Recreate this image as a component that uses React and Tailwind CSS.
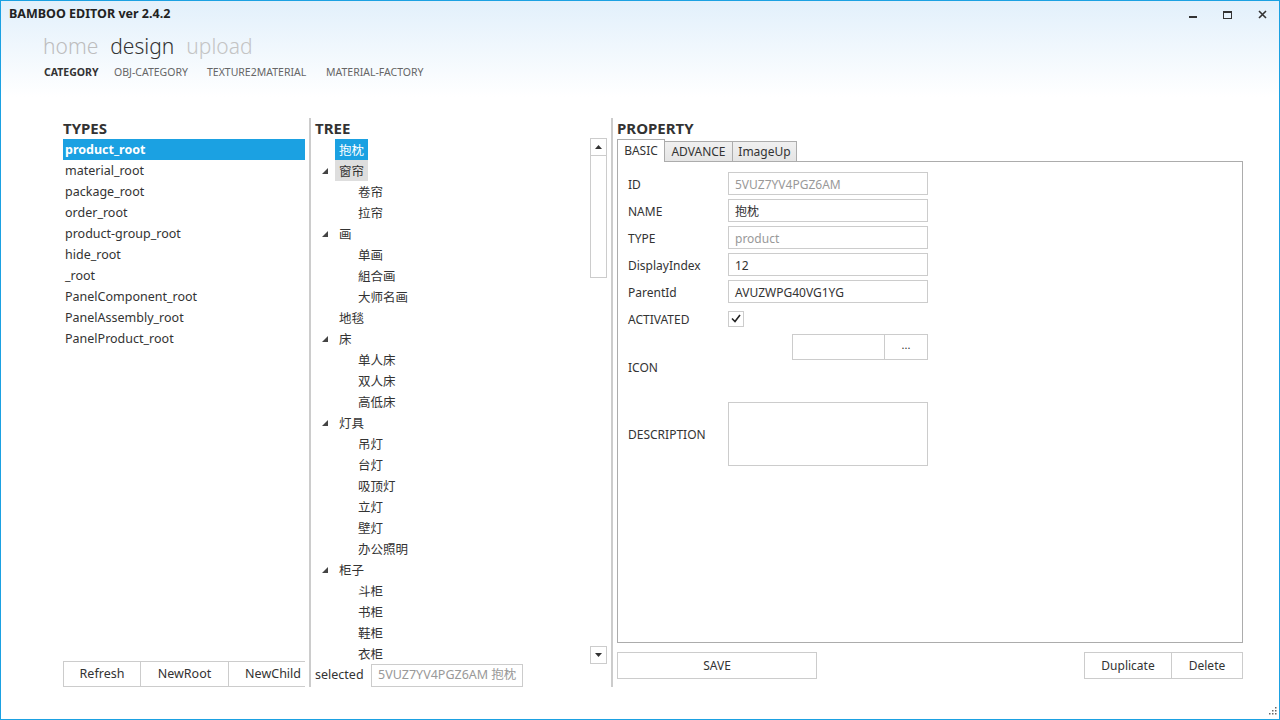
import React from "react";

const FONT = { fontFamily: '"Noto Sans","Noto Sans CJK SC",sans-serif' };

const types = [
  "product_root",
  "material_root",
  "package_root",
  "order_root",
  "product-group_root",
  "hide_root",
  "_root",
  "PanelComponent_root",
  "PanelAssembly_root",
  "PanelProduct_root",
];

// level 0 = root rows, level 1 = children; exp = shows expand glyph
const tree = [
  { t: "抱枕", l: 0, sel: true },
  { t: "窗帘", l: 0, exp: true, hover: true },
  { t: "卷帘", l: 1 },
  { t: "拉帘", l: 1 },
  { t: "画", l: 0, exp: true },
  { t: "单画", l: 1 },
  { t: "組合画", l: 1 },
  { t: "大师名画", l: 1 },
  { t: "地毯", l: 0 },
  { t: "床", l: 0, exp: true },
  { t: "单人床", l: 1 },
  { t: "双人床", l: 1 },
  { t: "高低床", l: 1 },
  { t: "灯具", l: 0, exp: true },
  { t: "吊灯", l: 1 },
  { t: "台灯", l: 1 },
  { t: "吸顶灯", l: 1 },
  { t: "立灯", l: 1 },
  { t: "壁灯", l: 1 },
  { t: "办公照明", l: 1 },
  { t: "柜子", l: 0, exp: true },
  { t: "斗柜", l: 1 },
  { t: "书柜", l: 1 },
  { t: "鞋柜", l: 1 },
  { t: "衣柜", l: 1 },
];

function Expander() {
  return (
    <svg width="6" height="6" viewBox="0 0 6 6" className="block">
      <polygon points="6,0 6,6 0,6" fill="#444" />
    </svg>
  );
}

function Field({ label, value, muted }) {
  return (
    <div className="flex items-center h-[23px]">
      <div className="w-[100px] text-[12px] text-[#333] pt-[2px]">{label}</div>
      <div
        className={`w-[200px] h-[23px] border border-[#cccccc] px-[6px] pt-[2px] flex items-center text-[12px] ${
          muted ? "text-[#999]" : "text-[#333]"
        }`}
      >
        {value}
      </div>
    </div>
  );
}

export default function App() {
  return (
    <div
      style={FONT}
      className="w-[1280px] h-[720px] border border-[#1ba1e2] bg-white flex flex-col overflow-hidden relative text-[#333]"
    >
      {/* title + navigation */}
      <div className="bg-gradient-to-b from-[#e2f0fb] to-white h-[96px] shrink-0">
        <div className="h-[27px] flex items-center justify-between pl-[8px]">
          <span className="text-[12.5px] font-bold text-[#222]">BAMBOO EDITOR ver 2.4.2</span>
          <div className="flex items-center h-full">
            <div className="w-[35px] flex justify-center">
              <div className="w-[8px] h-[2px] bg-[#333] mt-[4px]" />
            </div>
            <div className="w-[35px] flex justify-center">
              <div className="w-[9px] h-[8px] border border-[#333] border-t-2" />
            </div>
            <div className="w-[34px] flex justify-center">
              <svg width="9" height="9" viewBox="0 0 9 9">
                <path d="M1 1 L8 8 M8 1 L1 8" stroke="#333" strokeWidth="1.6" />
              </svg>
            </div>
          </div>
        </div>
        <div className="pl-[42px] pt-[2px] flex items-baseline gap-[12px] text-[21px] font-light leading-[32px]">
          <span className="text-[#bdbdbd]">home</span>
          <span className="text-[#333]">design</span>
          <span className="text-[#c4c4c4]">upload</span>
        </div>
        <div className="pl-[43px] mt-[2px] flex text-[10.5px] leading-[16px] text-[#666]">
          <span className="font-bold text-[#333] w-[70px]">CATEGORY</span>
          <span className="w-[93px]">OBJ-CATEGORY</span>
          <span className="w-[119px]">TEXTURE2MATERIAL</span>
          <span>MATERIAL-FACTORY</span>
        </div>
      </div>

      {/* main */}
      <div className="flex h-[569px] mt-[21px] pl-[62px]">
        {/* TYPES */}
        <div className="w-[242px] flex flex-col">
          <div className="h-[21px] leading-[21px] text-[15px] font-bold text-[#333]">TYPES</div>
          <div className="flex-1">
            {types.map((t, i) => (
              <div
                key={t}
                className={`h-[21px] leading-[21px] px-[2px] text-[12.5px] ${
                  i === 0 ? "bg-[#1ba1e2] text-white font-bold" : "text-[#333]"
                }`}
              >
                {t}
              </div>
            ))}
          </div>
          <div className="flex h-[26px] text-[12.5px]">
            <div className="w-[78px] border border-[#cccccc] flex items-center justify-center">Refresh</div>
            <div className="w-[88px] border border-l-0 border-[#cccccc] flex items-center justify-center">NewRoot</div>
            <div className="flex-1 border border-l-0 border-r-0 border-[#cccccc] flex items-center justify-end pr-[4px] overflow-hidden">
              NewChild
            </div>
          </div>
        </div>

        <div className="w-[2px] bg-[#cccccc] ml-[4px] mr-[4px]" />

        {/* TREE */}
        <div className="w-[292px] flex flex-col">
          <div className="h-[21px] leading-[21px] text-[15px] font-bold text-[#333]">TREE</div>
          <div className="flex-1 flex">
            <div className="flex-1">
              {tree.map((n, i) => (
                <div key={i} className="h-[21px] flex items-center">
                  <div className={`${n.l === 0 ? "w-[20px]" : "w-[39px]"} flex justify-end pr-[7px] shrink-0`}>
                    {n.exp ? <Expander /> : null}
                  </div>
                  <div
                    className={`h-[21px] leading-[21px] px-[4px] pt-[1px] text-[12.5px] ${
                      n.sel ? "bg-[#1ba1e2] text-white" : n.hover ? "bg-[#dedede] text-[#333]" : "text-[#333]"
                    }`}
                  >
                    {n.t}
                  </div>
                </div>
              ))}
            </div>
            <div className="w-[17px] flex flex-col mt-[-1px]">
              <div className="h-[18px] border border-[#cccccc] flex items-center justify-center">
                <svg width="7" height="4" viewBox="0 0 7 4">
                  <polygon points="3.5,0 7,4 0,4" fill="#333" />
                </svg>
              </div>
              <div className="h-[122px] border border-t-0 border-[#cccccc]" />
              <div className="flex-1" />
              <div className="h-[18px] border border-[#cccccc] flex items-center justify-center">
                <svg width="7" height="4" viewBox="0 0 7 4">
                  <polygon points="0,0 7,0 3.5,4" fill="#333" />
                </svg>
              </div>
            </div>
          </div>
          <div className="h-[23px] flex items-center">
            <span className="text-[12.5px] w-[56px]">selected</span>
            <div className="w-[152px] h-[23px] border border-[#cccccc] flex items-center px-[6px] text-[12.5px] text-[#999] whitespace-nowrap overflow-hidden">
              5VUZ7YV4PGZ6AM 抱枕
            </div>
          </div>
        </div>

        <div className="w-[2px] bg-[#cccccc] ml-[4px] mr-[4px]" />

        {/* PROPERTY */}
        <div className="w-[626px] flex flex-col">
          <div className="h-[21px] leading-[21px] text-[15px] font-bold text-[#333]">PROPERTY</div>
          <div className="flex items-end h-[22px] text-[12px]">
            <div className="w-[48px] h-[23px] border border-b-0 border-[#acacac] bg-white flex items-center justify-center relative top-[1px]">
              BASIC
            </div>
            <div className="w-[68px] h-[20px] border border-l-0 border-b-0 border-[#acacac] bg-gradient-to-b from-[#f0f0f0] to-[#e5e5e5] flex items-center justify-center">
              ADVANCE
            </div>
            <div className="w-[64px] h-[20px] border border-l-0 border-b-0 border-[#acacac] bg-gradient-to-b from-[#f0f0f0] to-[#e5e5e5] flex items-center justify-center">
              ImageUp
            </div>
          </div>
          <div className="h-[482px] border border-[#acacac] pl-[10px] pt-[10px] flex flex-col gap-[4px]">
            <Field label="ID" value="5VUZ7YV4PGZ6AM" muted />
            <Field label="NAME" value="抱枕" />
            <Field label="TYPE" value="product" muted />
            <Field label="DisplayIndex" value="12" />
            <Field label="ParentId" value="AVUZWPG40VG1YG" />
            <div className="flex items-center h-[23px]">
              <div className="w-[100px] text-[12px] pt-[2px]">ACTIVATED</div>
              <div className="w-[16px] h-[16px] border border-[#cccccc] flex items-center justify-center">
                <svg width="10" height="9" viewBox="0 0 10 9">
                  <path d="M1 4.5 L4 7.5 L9 1" stroke="#222" strokeWidth="1.6" fill="none" />
                </svg>
              </div>
            </div>
            <div className="flex h-[66px]">
              <div className="w-[100px] text-[12px] self-center pt-[1px]">ICON</div>
              <div className="w-[200px] flex justify-end items-start">
                <div className="w-[93px] h-[26px] border border-[#cccccc]" />
                <div className="w-[43px] h-[26px] border border-l-0 border-[#cccccc] flex items-center justify-center text-[11px] pb-[3px]">
                  ...
                </div>
              </div>
            </div>
            <div className="flex items-center h-[64px] -mt-[2px]">
              <div className="w-[100px] text-[12px] pt-[2px]">DESCRIPTION</div>
              <div className="w-[200px] h-[64px] border border-[#cccccc]" />
            </div>
          </div>
          <div className="flex justify-between mt-[9px] h-[27px] text-[12px]">
            <div className="w-[200px] border border-[#cccccc] flex items-center justify-center">SAVE</div>
            <div className="flex">
              <div className="w-[88px] border border-[#cccccc] flex items-center justify-center">Duplicate</div>
              <div className="w-[71px] border border-l-0 border-[#cccccc] flex items-center justify-center">Delete</div>
            </div>
          </div>
        </div>
      </div>

      {/* resize grip */}
      <svg width="10" height="10" viewBox="0 0 10 10" className="absolute right-[2px] bottom-[2px]">
        <rect x="8" y="0" width="1.5" height="1.5" fill="#666" />
        <rect x="5" y="3" width="1.5" height="1.5" fill="#666" />
        <rect x="8" y="3" width="1.5" height="1.5" fill="#666" />
        <rect x="2" y="6" width="1.5" height="1.5" fill="#666" />
        <rect x="5" y="6" width="1.5" height="1.5" fill="#666" />
        <rect x="8" y="6" width="1.5" height="1.5" fill="#666" />
      </svg>
    </div>
  );
}
